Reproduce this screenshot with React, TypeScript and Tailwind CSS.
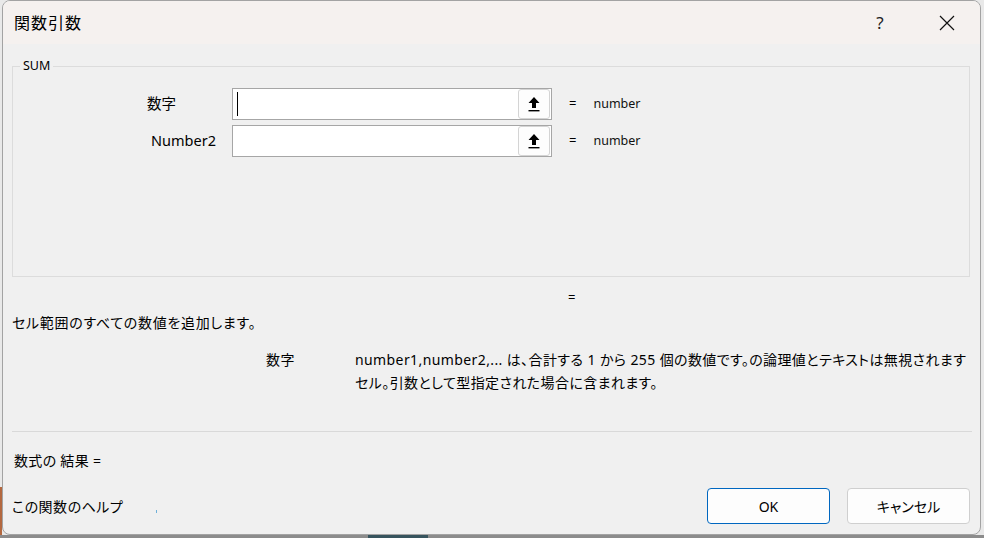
import React from 'react';

const ui = "font-['Noto_Sans','Noto_Sans_CJK_JP',sans-serif] [font-feature-settings:'palt']";

const RefButton = () => (
    <button className="w-[32px] h-[30px] mr-px flex items-center justify-center bg-[#fdfdfd] border border-[#d4d4d4] rounded-[3px]">
        <svg width="12" height="16" viewBox="0 0 12 16">
            <path d="M6 1 L11.5 7 L8 7 L8 12 L4 12 L4 7 L0.5 7 Z" fill="#000" />
            <rect x="0.5" y="14" width="11" height="1.4" fill="#000" />
        </svg>
    </button>
);

interface ArgRowProps {
    label: string;
    labelPad: string;
    caret?: boolean;
}

const ArgRow = ({ label, labelPad, caret }: ArgRowProps) => (
    <div className="flex items-center h-[32px]">
        <div className={`w-[218px] text-right text-[14.5px] text-black ${labelPad}`}>{label}</div>
        <div className="w-[320px] h-[32px] flex items-center bg-white border border-[#a6a6a6]">
            <div className="flex-1 pl-[4px] flex items-center">
                {caret && <span className="block w-px h-[24px] bg-black" />}
            </div>
            <RefButton />
        </div>
        <span className="ml-[17px] text-[13px] text-black">=</span>
        <span className="ml-[17px] text-[12.5px] text-[#111]">number</span>
    </div>
);

export default function App() {
    return (
        <div className={`w-[984px] h-[538px] flex flex-col bg-[#e9e9e9] ${ui}`}>
            <div className="flex-1 flex min-h-0">
                <div className="w-[2px] flex flex-col">
                    <div className="flex-1" />
                    <div className="h-[48px] bg-[#b3683f]" />
                </div>
                <div className="flex-1 flex flex-col bg-[#f0f0f0] border border-[#a3a3a3] rounded-[8px] overflow-hidden">
                    {/* title bar */}
                    <div className="h-[43px] flex items-center bg-[#f5f1ef] pl-[11px]">
                        <span className="text-[16px] tracking-[1px] text-black">関数引数</span>
                        <div className="flex-1" />
                        <button className="w-[46px] h-[43px] flex items-center justify-center text-[17px] text-[#222]">?</button>
                        <button className="w-[46px] h-[43px] ml-[21px] mr-[10px] flex items-center justify-center">
                            <svg width="16" height="16" viewBox="0 0 16 16">
                                <path d="M1 1 L15 15 M15 1 L1 15" stroke="#111" strokeWidth="1.2" />
                            </svg>
                        </button>
                    </div>

                    <div className="flex-1 flex flex-col pl-[9px] pr-[10px]">
                        <fieldset className="mt-[14px] h-[219px] border border-[#dcdcdc] pl-px">
                            <legend className="ml-[6px] px-[3px] text-[12.5px] leading-[16px] text-black">SUM</legend>
                            <div className="mt-[14px] flex flex-col gap-[5px]">
                                <ArgRow label="数字" labelPad="pr-[56px]" caret />
                                <ArgRow label="Number2" labelPad="pr-[16px]" />
                            </div>
                        </fieldset>

                        <div className="mt-[10px] h-[20px] leading-[20px] pl-[556px] text-[13px] text-black">=</div>

                        <div className="mt-[6px] h-[20px] leading-[20px] text-[14px] tracking-[0.7px] text-black">セル範囲のすべての数値を追加します。</div>

                        <div className="mt-[15px] flex text-[14px] leading-[23px] text-black">
                            <div className="ml-[254px] w-[89px] tracking-[0.5px]">数字</div>
                            <div className="whitespace-nowrap tracking-[0.4px]">
                                <div>number1,number2,... は、合計する 1 から 255 個の数値です。の論理値とテキストは無視されます</div>
                                <div>セル。引数として型指定された場合に含まれます。</div>
                            </div>
                        </div>

                        <div className="mt-[37px] h-px bg-[#d9d9d9] mr-[-2px]" />

                        <div className="mt-[19px] h-[20px] leading-[20px] pl-[2px] text-[14px] tracking-[0.3px] text-black">数式の 結果 =</div>

                        <div className="mt-[17px] flex items-center">
                            <span className="text-[14px] tracking-[0.5px] text-black">この関数のヘルプ</span>
                            <span className="ml-[33px] mt-[10px] block w-px h-[3px] bg-[#6fb0d8]" />
                            <div className="flex-1" />
                            <button className="w-[123px] h-[36px] rounded-[4px] bg-[#fdfdfd] border border-[#0067c0] text-[14px] text-black">OK</button>
                            <button className="ml-[17px] w-[123px] h-[36px] rounded-[4px] bg-[#fdfdfd] border border-[#cfcfcf] text-[14px] text-black">キャンセル</button>
                        </div>
                        <div className="h-[10px]" />
                    </div>
                </div>
                <div className="w-[3px]" />
            </div>
            {/* strip of the window underneath */}
            <div className="h-[3px] flex">
                <div className="w-[368px] bg-[#8c8c8c]" />
                <div className="w-[60px] bg-[#37545e]" />
                <div className="flex-1 bg-[#8c8c8c]" />
            </div>
        </div>
    );
}
